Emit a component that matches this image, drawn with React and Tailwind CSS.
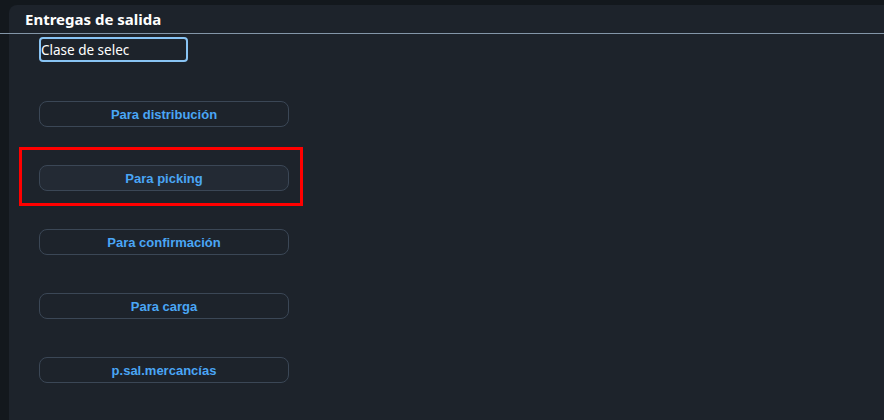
import { useState } from "react";

const buttons = [
  "Para distribución",
  "Para picking",
  "Para confirmación",
  "Para carga",
  "p.sal.mercancías",
];

function ActionButton({ label, hovered }) {
  return (
    <button
      className={`block w-[250px] h-[26px] rounded-lg border border-[#3b4756] text-[13px] font-bold text-[#4aa6f5] leading-none
        ${hovered ? "bg-[#232a34]" : "bg-[#1d232b]"}`}
      style={{ fontFamily: '"Liberation Sans", Arial, sans-serif' }}
    >
      {label}
    </button>
  );
}

export default function App() {
  const [value, setValue] = useState("Clase de selec");

  return (
    <div
      className="h-screen w-full overflow-hidden bg-[#13181d] pl-[9px] pt-[5px]"
      style={{ fontFamily: '"Noto Sans", "Open Sans", sans-serif' }}
    >
      <div className="h-full bg-[#1d232b] rounded-tl-lg">
        <div className="h-[28px] flex items-center pl-4 text-[15px] font-bold text-white">
          Entregas de salida
        </div>
        <div className="h-px bg-[#8396a8] -ml-[9px]" />

        <div className="pl-[30px] pt-[3px] flex flex-col items-start">
          <input
            value={value}
            onChange={(e) => setValue(e.target.value)}
            className="block w-[149px] h-[25px] rounded border-2 border-[#89c4f4] bg-[#1d232b] px-0 text-[13.5px] text-white outline-none"
          />

          <div className="mt-[39px] flex flex-col gap-[38px]">
            {buttons.map((b) => (
              <div key={b} className="relative">
                <ActionButton label={b} hovered={b === "Para picking"} />
                {b === "Para picking" && (
                  <div className="absolute -left-[20px] -top-[18px] -right-[14px] -bottom-[15px] border-[3px] border-[#ff0000] pointer-events-none" />
                )}
              </div>
            ))}
          </div>
        </div>
      </div>
    </div>
  );
}
